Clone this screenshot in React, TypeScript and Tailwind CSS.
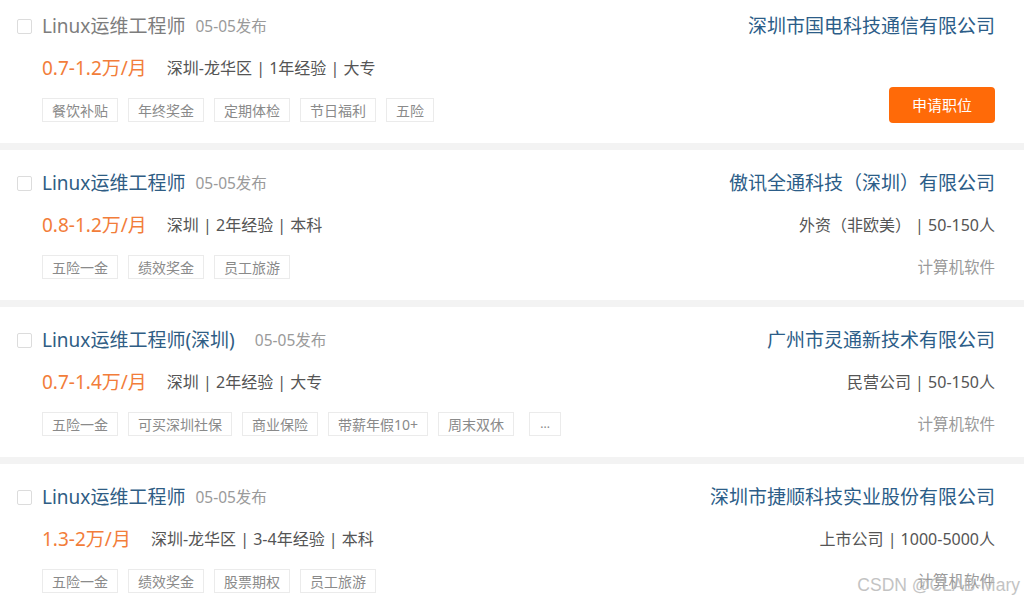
import React from "react";

type Job = {
  title: string;
  date: string;
  salary: string;
  info: string;
  tags: string[];
  company: string;
  meta?: string;
  industry?: string;
  visited?: boolean;
  apply?: boolean;
  more?: boolean;
};

const jobs: Job[] = [
  {
    title: "Linux运维工程师",
    date: "05-05发布",
    salary: "0.7-1.2万/月",
    info: "深圳-龙华区 | 1年经验 | 大专",
    tags: ["餐饮补贴", "年终奖金", "定期体检", "节日福利", "五险"],
    company: "深圳市国电科技通信有限公司",
    visited: true,
    apply: true,
  },
  {
    title: "Linux运维工程师",
    date: "05-05发布",
    salary: "0.8-1.2万/月",
    info: "深圳 | 2年经验 | 本科",
    tags: ["五险一金", "绩效奖金", "员工旅游"],
    company: "傲讯全通科技（深圳）有限公司",
    meta: "外资（非欧美） | 50-150人",
    industry: "计算机软件",
  },
  {
    title: "Linux运维工程师(深圳)",
    date: "05-05发布",
    salary: "0.7-1.4万/月",
    info: "深圳 | 2年经验 | 大专",
    tags: ["五险一金", "可买深圳社保", "商业保险", "带薪年假10+", "周末双休"],
    company: "广州市灵通新技术有限公司",
    meta: "民营公司 | 50-150人",
    industry: "计算机软件",
    more: true,
  },
  {
    title: "Linux运维工程师",
    date: "05-05发布",
    salary: "1.3-2万/月",
    info: "深圳-龙华区 | 3-4年经验 | 本科",
    tags: ["五险一金", "绩效奖金", "股票期权", "员工旅游"],
    company: "深圳市捷顺科技实业股份有限公司",
    meta: "上市公司 | 1000-5000人",
    industry: "计算机软件",
  },
];

function Card({ job }: { job: Job }) {
  return (
    <div className="flex h-[150px] shrink-0 justify-between bg-white pl-[17px] pr-[29px] pt-[21px]">
      <div className="flex flex-col gap-[18px]">
        <div className="flex h-6 items-center">
          <span className="mr-[10px] h-[15px] w-[15px] rounded-[2px] border border-[#dcdcdc] bg-white" />
          <span
            className={
              job.visited
                ? "text-[19px] leading-6 text-[#7d7d7d]"
                : "text-[19px] leading-6 text-[#2f5d84]"
            }
          >
            {job.title}
          </span>
          <span
            className={
              job.title.length > 10
                ? "ml-[20px] text-[15.5px] leading-6 text-[#9a9a9a]"
                : "ml-[10px] text-[15.5px] leading-6 text-[#9a9a9a]"
            }
          >
            {job.date}
          </span>
        </div>
        <div className="flex h-6 items-center pl-[25px]">
          <span className="text-[19px] leading-6 text-[#f27d3a]">{job.salary}</span>
          <span className="ml-[20px] text-[16px] leading-6 text-[#555]">{job.info}</span>
        </div>
        <div className="flex h-6 items-center gap-[10px] pl-[25px]">
          {job.tags.map((t) => (
            <span
              key={t}
              className="flex h-6 items-center border border-[#ebebeb] px-[9px] text-[14px] text-[#8a8a8a]"
            >
              {t}
            </span>
          ))}
          {job.more && (
            <span className="ml-[5px] flex h-6 w-[32px] items-center justify-center border border-[#ebebeb] text-[12px] text-[#8a8a8a]">
              ...
            </span>
          )}
        </div>
      </div>
      <div className="flex flex-col items-end gap-[18px]">
        <div className="flex h-6 items-center text-[19px] leading-6 text-[#2c5d88]">{job.company}</div>
        {job.meta && (
          <div className="flex h-6 items-center text-[16px] leading-6 text-[#555]">{job.meta}</div>
        )}
        {job.industry && (
          <div className="flex h-6 items-center text-[15.5px] leading-6 text-[#9a9a9a]">{job.industry}</div>
        )}
        {job.apply && (
          <button className="mt-[31px] flex h-[36px] w-[106px] items-center justify-center rounded-[4px] bg-[#ff6a08] text-[15px] text-white">
            申请职位
          </button>
        )}
      </div>
    </div>
  );
}

export default function App() {
  return (
    <div className="relative h-[603px] w-[1024px] overflow-hidden bg-[#f3f3f3] font-['Noto_Sans','Noto_Sans_CJK_SC',sans-serif]">
      <div className="-mt-[7px] flex flex-col gap-[7px]">
        {jobs.map((j, i) => (
          <Card key={i} job={j} />
        ))}
      </div>
      <div className="pointer-events-none absolute bottom-[5px] right-[4px] font-['Liberation_Sans',sans-serif] text-[17.5px] text-[#b5b5b5] opacity-80">
        CSDN @CLAB-Mary
      </div>
    </div>
  );
}
